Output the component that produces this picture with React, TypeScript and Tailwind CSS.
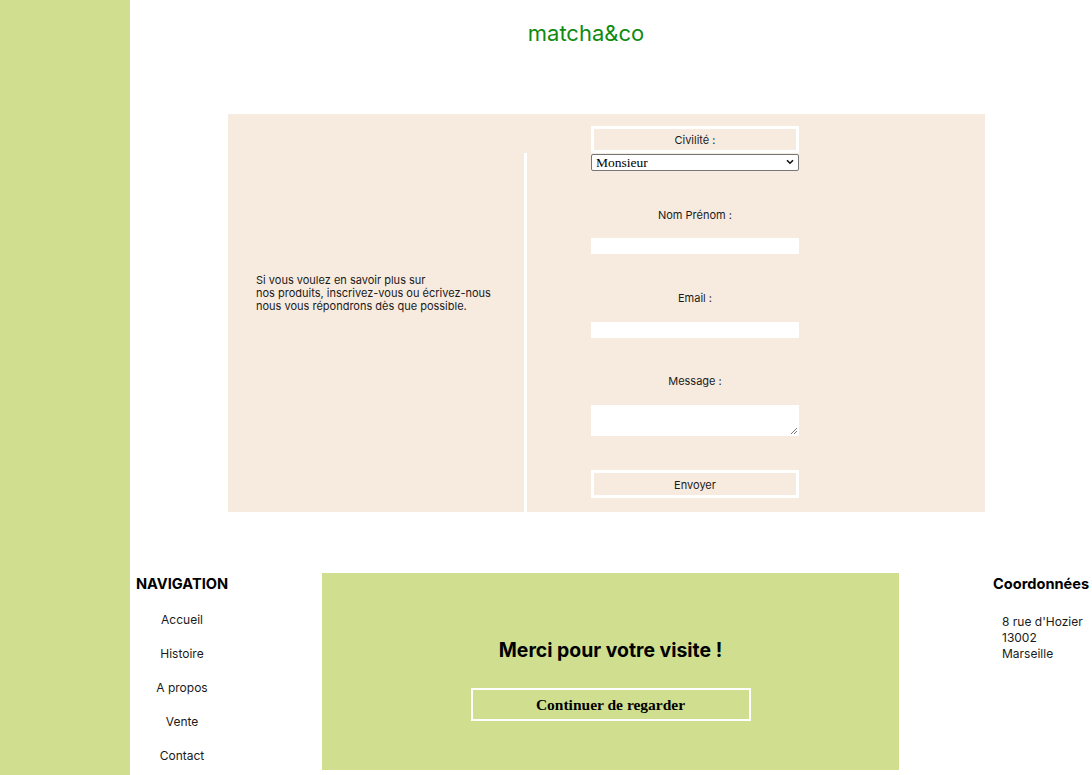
import React from 'react';

const sans = { fontFamily: 'Inter, "Noto Sans", sans-serif' };
const serif = { fontFamily: '"Liberation Serif", "DejaVu Serif", serif' };

const navLinks = ['Accueil', 'Histoire', 'A propos', 'Vente', 'Contact'];

const ContactForm: React.FC = () => {
  return (
    <div className="ml-[98px] mt-[68px] flex h-[398px] w-[757px] bg-[#f7ebdf]">
      <div className="w-[296px] pl-[28px] pt-[160px]">
        <p className="text-[11px] leading-[13px] text-[#1a1a1a]">
          Si vous voulez en savoir plus sur
          <br />
          nos produits, inscrivez-vous ou écrivez-nous
          <br />
          nous vous répondrons dès que possible.
        </p>
      </div>
      <div className="mt-[39px] w-[3px] bg-white" />
      <div className="flex flex-col pl-[64px] pt-[12px]">
        <div className="flex h-[27px] w-[208px] items-center justify-center border-[3px] border-white pt-[1px] text-[11px] text-[#1a1a1a]">
          Civilité :
        </div>
        <div className="relative mt-[1px] h-[17px] w-[208px] rounded-[2px] border border-[#767676] bg-white">
          <span className="absolute left-[4px] top-[0px] text-[13.5px] leading-[15px] text-black" style={serif}>
            Monsieur
          </span>
          <svg className="absolute right-[4px] top-[4px]" width="8" height="6" viewBox="0 0 8 6">
            <path d="M1 1.2 L4 4.2 L7 1.2" fill="none" stroke="#111" strokeWidth="1.6" />
          </svg>
        </div>
        <p className="mt-[38px] text-center text-[11px] leading-[13px] text-[#1a1a1a]">Nom Prénom :</p>
        <div className="mt-[16px] h-[16px] w-[208px] bg-white" />
        <p className="mt-[38px] text-center text-[11px] leading-[13px] text-[#1a1a1a]">Email :</p>
        <div className="mt-[17px] h-[16px] w-[208px] bg-white" />
        <p className="mt-[37px] text-center text-[11px] leading-[13px] text-[#1a1a1a]">Message :</p>
        <div className="relative mt-[17px] h-[31px] w-[208px] bg-white">
          <svg className="absolute bottom-[1px] right-[1px]" width="8" height="8" viewBox="0 0 8 8">
            <path d="M7 1 L1 7 M7 4 L4 7" stroke="#777" strokeWidth="1" />
          </svg>
        </div>
        <div className="mt-[34px] flex h-[28px] w-[208px] items-center justify-center border-[3px] border-white pt-[2px] text-[11px] text-[#1a1a1a]">
          Envoyer
        </div>
      </div>
    </div>
  );
};

const Footer: React.FC = () => {
  return (
    <footer className="mt-[61px] flex items-start">
      <div className="w-[192px] pl-[6px]">
        <h3 className="mt-[1px] text-[14.6px] font-bold leading-[20px] text-black">NAVIGATION</h3>
        <ul className="w-[92px] pt-[2px]">
          {navLinks.map((link) => (
            <li key={link} className="mt-[14px] text-center text-[12px] leading-[20px] text-[#1a1a1a]">
              {link}
            </li>
          ))}
        </ul>
      </div>
      <div className="flex h-[197px] w-[577px] flex-col items-center bg-[#cfdf8f] pt-[64px]">
        <h2 className="text-[19.4px] font-bold leading-[26px] text-black">Merci pour votre visite !</h2>
        <div
          className="mt-[25px] flex h-[33px] w-[280px] items-center justify-center border-2 border-white text-[15.5px] font-bold text-black"
          style={serif}
        >
          Continuer de regarder
        </div>
      </div>
      <div className="ml-[94px] whitespace-nowrap">
        <h3 className="mt-[1px] text-[14.6px] font-bold leading-[20px] text-black">Coordonnées</h3>
        <p className="mt-[20px] pl-[9px] text-[12px] leading-[16px] text-[#1a1a1a]">
          8 rue d'Hozier
          <br />
          13002
          <br />
          Marseille
        </p>
      </div>
    </footer>
  );
};

const App: React.FC = () => {
  return (
    <div className="flex h-[775px] w-[1092px] overflow-hidden bg-white" style={sans}>
      <aside className="h-full w-[130px] shrink-0 bg-[#cfdf8f]" />
      <main className="flex-1">
        <header className="w-[912px] pt-[20px] text-center">
          <h1 className="text-[22px] leading-[26px] text-[#0f8a0f]">matcha&amp;co</h1>
        </header>
        <ContactForm />
        <Footer />
      </main>
    </div>
  );
};

export default App;
